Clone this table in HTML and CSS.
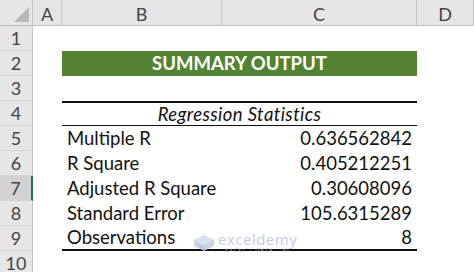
FILE: index.html
```html
<!DOCTYPE html>
<html>
<head>
    <link rel="stylesheet" href="styles.css">
</head>
<body>
    <div class="sheet">
        <!-- column headers -->
        <div class="corner"><span class="corner-mark"></span></div>
        <div class="col-head">A</div>
        <div class="col-head">B</div>
        <div class="col-head">C</div>
        <div class="col-head">D</div>

        <div class="row-head">1</div>
        <div class="cell"></div>
        <div class="cell span-2"></div>
        <div class="cell"></div>

        <div class="row-head">2</div>
        <div class="cell"></div>
        <div class="cell span-2 title">SUMMARY OUTPUT</div>
        <div class="cell"></div>

        <div class="row-head">3</div>
        <div class="cell"></div>
        <div class="cell span-2"></div>
        <div class="cell"></div>

        <div class="row-head">4</div>
        <div class="cell"></div>
        <div class="cell span-2 stats-head">Regression Statistics</div>
        <div class="cell"></div>

        <div class="row-head">5</div>
        <div class="cell"></div>
        <div class="cell label">Multiple R</div>
        <div class="cell value">0.636562842</div>
        <div class="cell"></div>

        <div class="row-head">6</div>
        <div class="cell"></div>
        <div class="cell label">R Square</div>
        <div class="cell value">0.405212251</div>
        <div class="cell"></div>

        <div class="row-head selected">7</div>
        <div class="cell"></div>
        <div class="cell label">Adjusted R Square</div>
        <div class="cell value">0.30608096</div>
        <div class="cell"></div>

        <div class="row-head">8</div>
        <div class="cell"></div>
        <div class="cell label">Standard Error</div>
        <div class="cell value">105.6315289</div>
        <div class="cell"></div>

        <div class="row-head">9</div>
        <div class="cell"></div>
        <div class="cell label last">Observations</div>
        <div class="cell value last">8</div>
        <div class="cell"></div>

        <div class="row-head">10</div>
        <div class="cell"></div>
        <div class="cell span-2"></div>
        <div class="cell"></div>

        <div class="watermark">
            <svg class="wm-logo" width="22" height="18" viewBox="0 0 22 18">
                <path d="M11 1 L21 6 L21 12 L11 17 L1 12 L1 6 Z" fill="#c3cde0"/>
                <path d="M11 1 L21 6 L11 11 L1 6 Z" fill="#d4dcea"/>
                <path d="M5 9 L11 12 L11 16 L5 13 Z" fill="#b3c0d8"/>
            </svg>
            <div class="wm-text">
                <div class="wm-name">exceldemy</div>
                <div class="wm-tag">EXCEL · DATA · BI</div>
            </div>
        </div>
    </div>
</body>
</html>
```

FILE: styles.css
```css
body {
    margin: 0;
    background: #ffffff;
    font-family: Lato, "Open Sans", sans-serif;
}
.sheet {
    position: relative;
    display: grid;
    grid-template-columns: 33px 29px 160px 195px 57px;
    grid-template-rows: 26px repeat(10, 25px);
    width: 474px;
    height: 272px;
    overflow: hidden;
}
.corner {
    position: relative;
    background: #e6e6e6;
    border-right: 1px solid #c6c6c6;
    border-bottom: 1px solid #bdbdbd;
}
.corner-mark {
    position: absolute;
    right: 3px;
    bottom: 3px;
    width: 0;
    height: 0;
    border-left: 15px solid transparent;
    border-bottom: 15px solid #b8b8b8;
}
.col-head {
    background: #e6e6e6;
    border-right: 1px solid #c6c6c6;
    border-bottom: 1px solid #bdbdbd;
    color: #444444;
    font-size: 18px;
    text-align: center;
    line-height: 28px;
}
.row-head {
    background: #e6e6e6;
    border-right: 1px solid #c6c6c6;
    border-bottom: 1px solid #d4d4d4;
    color: #444444;
    font-size: 18px;
    text-align: center;
    line-height: 25px;
}
.row-head.selected {
    background: #d2d2d2;
    border-right: 2px solid #217346;
}
.cell {
    font-size: 18.5px;
    color: #111111;
    line-height: 25px;
    white-space: nowrap;
}
.span-2 {
    grid-column: span 2;
}
.title {
    background: #548235;
    color: #ffffff;
    font-weight: bold;
    text-align: center;
}
.stats-head {
    font-style: italic;
    text-align: center;
    letter-spacing: 0.4px;
    border-top: 2px solid #111111;
    border-bottom: 1px solid #111111;
    line-height: 22px;
}
.label {
    padding-left: 5px;
}
.value {
    text-align: right;
    padding-right: 5px;
}
.last {
    border-bottom: 2px solid #111111;
    line-height: 23px;
}
.watermark {
    position: absolute;
    left: 193px;
    top: 232px;
    display: flex;
    align-items: center;
    gap: 3px;
    opacity: 0.85;
}
.wm-name {
    font-family: "Open Sans", sans-serif;
    font-size: 15px;
    color: #b9c5dc;
    line-height: 15px;
    letter-spacing: 0.5px;
}
.wm-tag {
    font-family: "Open Sans", sans-serif;
    font-size: 5px;
    color: #c6cfe0;
    letter-spacing: 1.5px;
    text-align: center;
}
```
